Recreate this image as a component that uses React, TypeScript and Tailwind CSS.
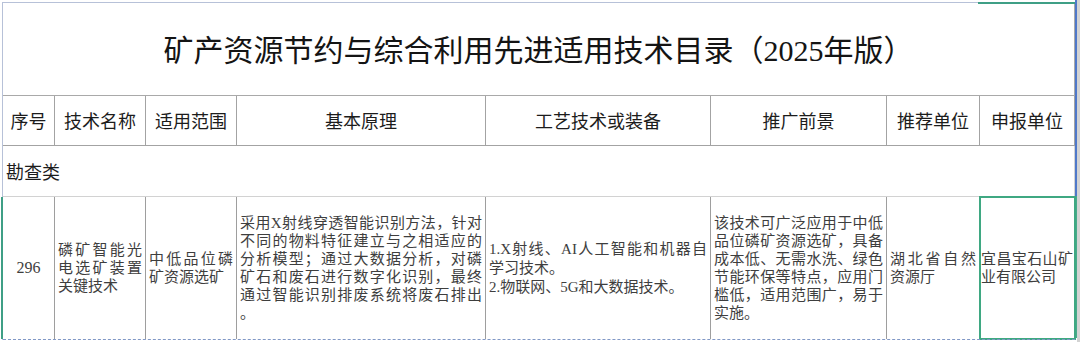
import type { ReactNode } from 'react';

const font = "font-['Liberation_Serif','Noto_Sans_CJK_SC',serif]";

const headers = ['序号', '技术名称', '适用范围', '基本原理', '工艺技术或装备', '推广前景', '推荐单位', '申报单位'];

// each cell: paragraphs -> pre-broken lines (all but the last line of a paragraph are justified)
const row: string[][][] = [
  [['296']],
  [['磷矿智能光', '电选矿装置', '关键技术']],
  [['中低品位磷', '矿资源选矿']],
  [
    [
      '采用X射线穿透智能识别方法，针对',
      '不同的物料特征建立与之相适应的',
      '分析模型；通过大数据分析，对磷',
      '矿石和废石进行数字化识别，最终',
      '通过智能识别排废系统将废石排出',
      '。',
    ],
  ],
  [['1.X射线、AI人工智能和机器自', '学习技术。'], ['2.物联网、5G和大数据技术。']],
  [
    [
      '该技术可广泛应用于中低',
      '品位磷矿资源选矿，具备',
      '成本低、无需水洗、绿色',
      '节能环保等特点，应用门',
      '槛低，适用范围广，易于',
      '实施。',
    ],
  ],
  [['湖北省自然', '资源厅']],
  [['宜昌宝石山矿', '业有限公司']],
];

function Paragraph({ lines }: { lines: string[] }) {
  return (
    <div>
      {lines.map((line, i) => (
        <div
          key={i}
          className={`whitespace-nowrap ${i < lines.length - 1 ? 'text-justify [text-align-last:justify]' : 'text-left'}`}
        >
          {line}
        </div>
      ))}
    </div>
  );
}

function HeaderCell({ children }: { children: ReactNode }) {
  return (
    <div className="flex h-[50px] items-center justify-center border-r border-b border-[#a3a3a3] font-['Noto_Sans_CJK_SC',sans-serif] text-[18px] text-[#1c1c1c]">
      {children}
    </div>
  );
}

export default function App() {
  return (
    <div className="flex h-[342px] w-[1080px] overflow-hidden bg-white pl-[2px]">
      <div className="relative mt-[2px] w-[1073px] self-start border-t border-l border-[#b7c1d8]">
        <div className="absolute -top-px right-0 h-[2px] w-[97px] bg-[#3f9f86]" />

        <div className="grid grid-cols-[52px_91px_91px_249px_225px_176px_93px_95px]">
          <div
            className={`col-span-8 flex h-[93px] items-center justify-center border-r border-b border-[#a9a9a9] pt-[2px] text-[30px] text-[#141414] ${font}`}
          >
            矿产资源节约与综合利用先进适用技术目录（2025年版）
          </div>

          {headers.map((h) => (
            <HeaderCell key={h}>{h}</HeaderCell>
          ))}

          <div className="col-span-8 flex h-[51px] items-center border-r border-b border-[#d2d2d2] pl-[3px] font-['Noto_Sans_CJK_SC',sans-serif] text-[18px] text-[#1c1c1c]">
            勘查类
          </div>

          {row.map((cell, i) => (
            <div
              key={i}
              className={`flex h-[142px] flex-col justify-center border-r border-[#9e9e9e] text-[15px] leading-[18px] text-[#3e3e3e] ${font} ${
                i === 0 ? 'items-center text-[16px] shadow-[-2px_0_0_#3f9f86]' : ''
              } ${i === 7 ? 'px-px outline-2 -outline-offset-1 outline-[#3fa882]' : 'px-[3px]'} ${
                i === 4 ? 'leading-[19px]' : ''
              }`}
            >
              {cell.map((p, j) => (
                <Paragraph key={j} lines={p} />
              ))}
            </div>
          ))}

          <div className="col-span-8 border-t border-dashed border-[#8198c6]" />
        </div>
      </div>

      <div className="flex w-[2px] flex-col">
        <div className="h-[196px] bg-[#4f78c9]" />
        <div className="h-[142px] bg-[#46aa8a]" />
      </div>
      <div className="w-[3px] bg-[#d3d3d3]" />
    </div>
  );
}
